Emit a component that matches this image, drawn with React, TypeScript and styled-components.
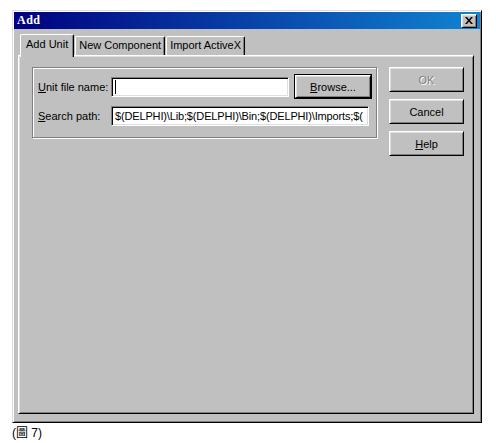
import React from "react";
import styled, { createGlobalStyle, css } from "styled-components";

const GlobalStyle = createGlobalStyle`
  html, body {
    margin: 0;
    padding: 0;
    background: #fff;
  }
  * {
    box-sizing: border-box;
  }
`;

const Page = styled.div`
  padding: 10px 0 0 12px;
  font-family: "Liberation Sans", Arial, sans-serif;
  font-size: 11px;
  color: #000;
`;

// Win98-ish dialog frame
const Window = styled.div`
  width: 470px;
  height: 413px;
  display: flex;
  flex-direction: column;
  background: #c0c0c0;
  border: 1px solid;
  border-color: #dfdfdf #000 #000 #dfdfdf;
  box-shadow: inset 1px 1px #fff, inset -1px -1px #808080;
  padding: 1px;
`;

const TitleBar = styled.div`
  height: 17px;
  display: flex;
  align-items: center;
  justify-content: space-between;
  padding: 0 3px 0 3px;
  background: linear-gradient(to right, #000080, #1084d0);
`;

const TitleText = styled.span`
  color: #fff;
  font-family: "Liberation Serif", "Times New Roman", serif;
  font-weight: bold;
  font-size: 12px;
  letter-spacing: 0.5px;
`;

const raised = css`
  background: #c0c0c0;
  border: 1px solid;
  border-color: #fff #000 #000 #fff;
  box-shadow: inset 1px 1px #dfdfdf, inset -1px -1px #808080;
`;

const CloseButton = styled.div`
  ${raised};
  width: 16px;
  height: 14px;
  display: flex;
  align-items: center;
  justify-content: center;
`;

const Body = styled.div`
  flex: 1;
  display: flex;
  flex-direction: column;
  padding: 5px 6px 7px 4px;
`;

const TabRow = styled.div`
  height: 21px;
  display: flex;
  align-items: flex-end;
  padding-left: 2px;
`;

const Tab = styled.div<{ $active?: boolean }>`
  position: relative;
  height: ${(p) => (p.$active ? "23px" : "19px")};
  margin-bottom: ${(p) => (p.$active ? "-2px" : "0")};
  margin-right: 1px;
  z-index: ${(p) => (p.$active ? 2 : 0)};
  padding: ${(p) => (p.$active ? "3px 5px 0 5px" : "2px 3px 0 3px")};
  background: #c0c0c0;
  border-top: 1px solid #fff;
  border-left: 1px solid #fff;
  border-right: 1px solid #000;
  border-top-left-radius: 2px;
  border-top-right-radius: 2px;
  box-shadow: inset -1px 0 #808080;
  white-space: nowrap;
  line-height: 13px;
`;

const Panel = styled.div`
  flex: 1;
  display: flex;
  align-items: flex-start;
  gap: 12px;
  padding: 11px 9px 0 13px;
  background: #c0c0c0;
  border: 1px solid;
  border-color: #fff #000 #000 #fff;
  box-shadow: inset 1px 1px #dfdfdf, inset -1px -1px #808080;
`;

const GroupBox = styled.div`
  width: 345px;
  display: flex;
  flex-direction: column;
  gap: 8px;
  padding: 7px 0 11px 5px;
  border: 1px solid #808080;
  box-shadow: inset 1px 1px #fff, 1px 1px #fff;
`;

const FieldRow = styled.div<{ $tall?: boolean }>`
  height: ${(p) => (p.$tall ? "23px" : "20px")};
  display: flex;
  align-items: center;
`;

const Label = styled.span`
  width: 73px;
  white-space: nowrap;
`;

const Edit = styled.div<{ $width: number }>`
  width: ${(p) => p.$width}px;
  height: 20px;
  display: flex;
  align-items: center;
  padding: 0 3px;
  overflow: hidden;
  white-space: nowrap;
  letter-spacing: -0.15px;
  background: #fff;
  border: 1px solid;
  border-color: #808080 #fff #fff #808080;
  box-shadow: inset 1px 1px #000, inset -1px -1px #dfdfdf;
`;

const Caret = styled.span`
  display: inline-block;
  width: 1px;
  height: 14px;
  background: #000;
`;

const Button = styled.div<{ $default?: boolean; $disabled?: boolean; $width?: number; $height?: number }>`
  ${raised};
  width: ${(p) => p.$width ?? 75}px;
  height: ${(p) => p.$height ?? 25}px;
  display: flex;
  align-items: center;
  justify-content: center;
  font-size: 11px;
  color: ${(p) => (p.$disabled ? "#808080" : "#000")};
  text-shadow: ${(p) => (p.$disabled ? "1px 1px #fff" : "none")};
  ${(p) =>
    p.$default &&
    css`
      box-shadow: inset 1px 1px #dfdfdf, inset -1px -1px #808080, 0 0 0 1px #000;
    `}
`;

const BrowseButton = styled(Button)`
  margin-left: 6px;
`;

const ButtonColumn = styled.div`
  display: flex;
  flex-direction: column;
  gap: 7px;
`;

const Caption = styled.div`
  margin-top: 3px;
  font-family: "Liberation Sans", "Noto Sans CJK TC", sans-serif;
  font-size: 12px;
  line-height: 14px;
`;

const Key = styled.span`
  text-decoration: underline;
`;

function CloseIcon() {
  return (
    <svg width="8" height="7" viewBox="0 0 8 7">
      <path d="M0 0h2l2 2.5L6 0h2L5 3.5 8 7H6L4 4.5 2 7H0l3-3.5z" fill="#000" />
    </svg>
  );
}

export default function App() {
  return (
    <Page>
      <GlobalStyle />
      <Window>
        <TitleBar>
          <TitleText>Add</TitleText>
          <CloseButton>
            <CloseIcon />
          </CloseButton>
        </TitleBar>

        <Body>
          <TabRow>
            <Tab $active>Add Unit</Tab>
            <Tab>New Component</Tab>
            <Tab>Import ActiveX</Tab>
          </TabRow>

          <Panel>
            <GroupBox>
              <FieldRow $tall>
                <Label>
                  <Key>U</Key>nit file name:
                </Label>
                <Edit $width={178}>
                  <Caret />
                </Edit>
                <BrowseButton $default $width={76} $height={23}>
                  <span>
                    <Key>B</Key>rowse...
                  </span>
                </BrowseButton>
              </FieldRow>
              <FieldRow>
                <Label>
                  <Key>S</Key>earch path:
                </Label>
                <Edit $width={258}>$(DELPHI)\Lib;$(DELPHI)\Bin;$(DELPHI)\Imports;$(</Edit>
              </FieldRow>
            </GroupBox>

            <ButtonColumn>
              <Button $disabled>OK</Button>
              <Button>Cancel</Button>
              <Button>
                <span>
                  <Key>H</Key>elp
                </span>
              </Button>
            </ButtonColumn>
          </Panel>
        </Body>
      </Window>
      <Caption>(圖 7)</Caption>
    </Page>
  );
}
